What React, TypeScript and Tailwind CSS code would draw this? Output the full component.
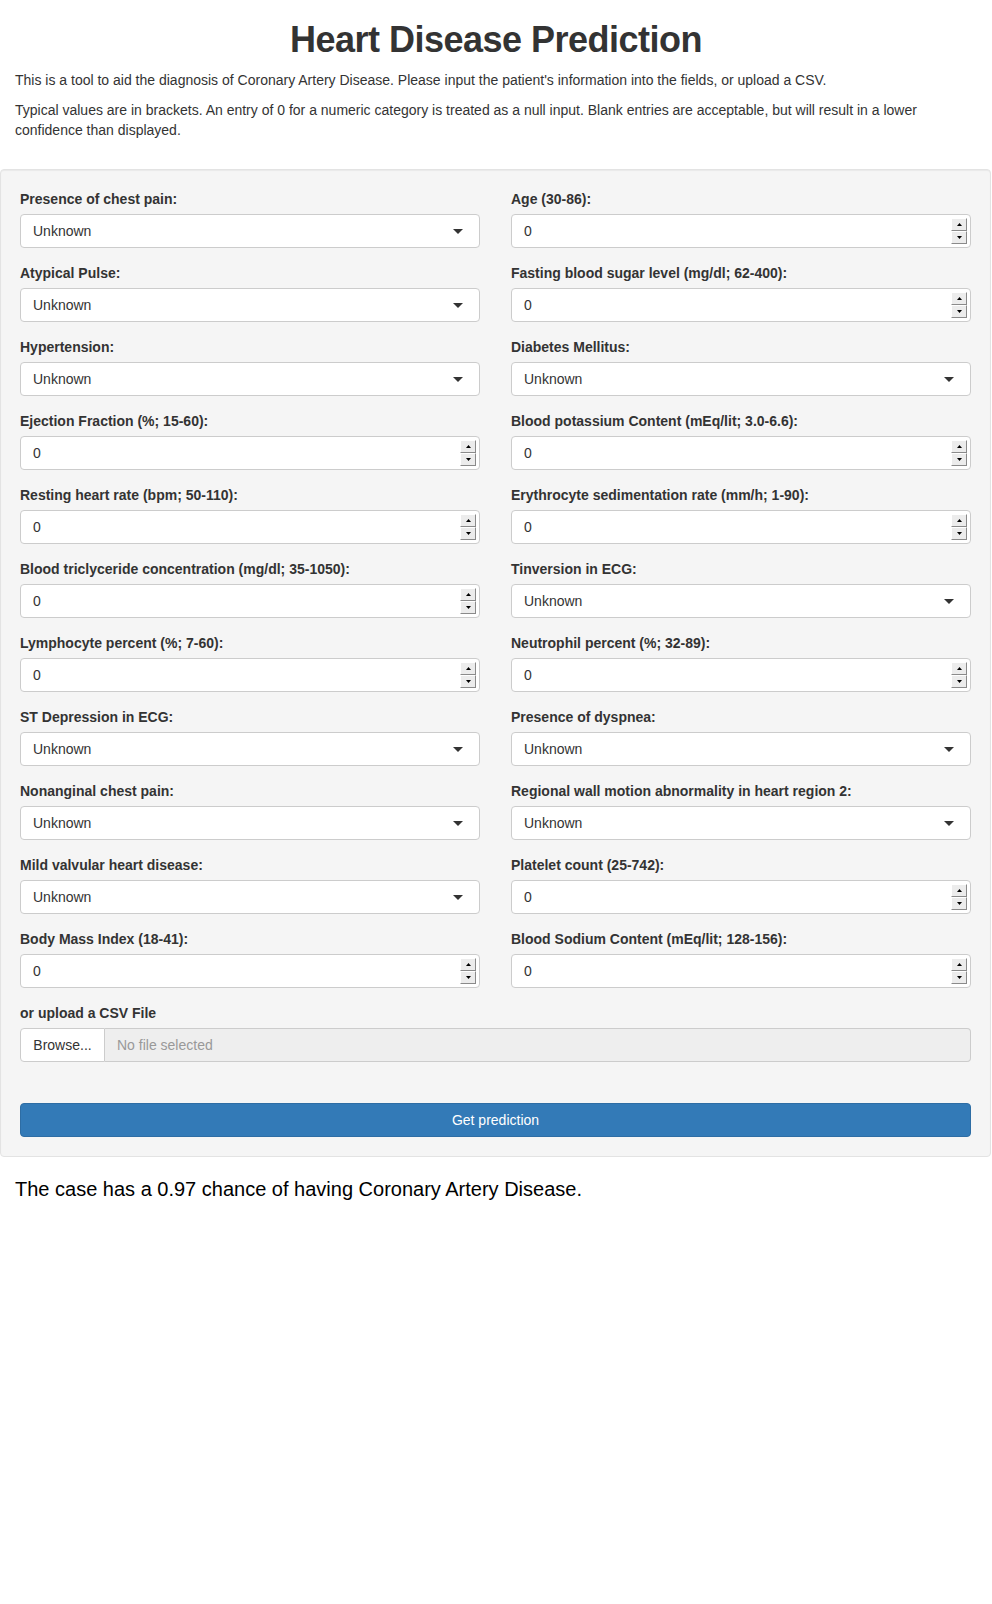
import React from 'react';

type Field = { label: string; kind: 'select' | 'number' };

const LEFT_FIELDS: Field[] = [
  { label: 'Presence of chest pain:', kind: 'select' },
  { label: 'Atypical Pulse:', kind: 'select' },
  { label: 'Hypertension:', kind: 'select' },
  { label: 'Ejection Fraction (%; 15-60):', kind: 'number' },
  { label: 'Resting heart rate (bpm; 50-110):', kind: 'number' },
  { label: 'Blood triclyceride concentration (mg/dl; 35-1050):', kind: 'number' },
  { label: 'Lymphocyte percent (%; 7-60):', kind: 'number' },
  { label: 'ST Depression in ECG:', kind: 'select' },
  { label: 'Nonanginal chest pain:', kind: 'select' },
  { label: 'Mild valvular heart disease:', kind: 'select' },
  { label: 'Body Mass Index (18-41):', kind: 'number' },
];

const RIGHT_FIELDS: Field[] = [
  { label: 'Age (30-86):', kind: 'number' },
  { label: 'Fasting blood sugar level (mg/dl; 62-400):', kind: 'number' },
  { label: 'Diabetes Mellitus:', kind: 'select' },
  { label: 'Blood potassium Content (mEq/lit; 3.0-6.6):', kind: 'number' },
  { label: 'Erythrocyte sedimentation rate (mm/h; 1-90):', kind: 'number' },
  { label: 'Tinversion in ECG:', kind: 'select' },
  { label: 'Neutrophil percent (%; 32-89):', kind: 'number' },
  { label: 'Presence of dyspnea:', kind: 'select' },
  { label: 'Regional wall motion abnormality in heart region 2:', kind: 'select' },
  { label: 'Platelet count (25-742):', kind: 'number' },
  { label: 'Blood Sodium Content (mEq/lit; 128-156):', kind: 'number' },
];

function SpinButton({ up }: { up?: boolean }) {
  return (
    <div className="flex h-[13px] w-[16px] items-center justify-center border border-t-[#fff] border-l-[#fff] border-r-[#8a8a8a] border-b-[#8a8a8a] bg-[#ececec]">
      <svg width="5" height="3" viewBox="0 0 5 3">
        {up ? <path d="M0 3 L2.5 0 L5 3 Z" fill="#000" /> : <path d="M0 0 L5 0 L2.5 3 Z" fill="#000" />}
      </svg>
    </div>
  );
}

function FormField({ field }: { field: Field }) {
  return (
    <div className="mb-[15px]">
      <div className="mb-[5px] text-[14px] font-bold leading-[20px] text-[#333]">{field.label}</div>
      {field.kind === 'select' ? (
        <div className="flex h-[34px] items-center justify-between rounded-[4px] border border-[#ccc] bg-white pl-[12px] pr-[16px] text-[14px] text-[#333]">
          <span>Unknown</span>
          <svg width="10" height="5" viewBox="0 0 10 5">
            <path d="M0 0 L10 0 L5 5 Z" fill="#333" />
          </svg>
        </div>
      ) : (
        <div className="flex h-[34px] items-center justify-between rounded-[4px] border border-[#ccc] bg-white pl-[12px] pr-[3px] text-[14px] text-[#333]">
          <span>0</span>
          <div className="flex flex-col">
            <SpinButton up />
            <SpinButton />
          </div>
        </div>
      )}
    </div>
  );
}

export default function App() {
  return (
    <div className="min-h-[1604px] bg-white pt-px font-['Liberation_Sans',Arial,sans-serif] text-[14px] leading-[20px] text-[#333]">
      <div className="px-[15px] pb-px">
        <h1 className="mt-[19px] mb-[10px] text-center text-[36px] font-bold leading-[40px] tracking-[-0.5px] text-[#333]">
          Heart Disease Prediction
        </h1>
        <p className="mb-[10px]">
          This is a tool to aid the diagnosis of Coronary Artery Disease. Please input the patient's information into the fields, or upload a CSV.
        </p>
        <p className="mb-[10px]">
          Typical values are in brackets. An entry of 0 for a numeric category is treated as a null input. Blank entries are acceptable, but will result in a lower confidence than displayed.
        </p>
      </div>

      {/* Input panel */}
      <div className="mt-[18px] w-[991px] rounded-[4px] border border-[#e3e3e3] bg-[#f5f5f5] p-[19px] shadow-[inset_0_1px_1px_rgba(0,0,0,0.05)]">
        <div className="grid grid-cols-2 gap-x-[31px]">
          <div>
            {LEFT_FIELDS.map((f) => (
              <FormField key={f.label} field={f} />
            ))}
          </div>
          <div>
            {RIGHT_FIELDS.map((f) => (
              <FormField key={f.label} field={f} />
            ))}
          </div>
        </div>

        <div className="mb-[5px] text-[14px] font-bold leading-[20px]">or upload a CSV File</div>
        <div className="flex h-[34px] text-[14px]">
          <div className="flex w-[85px] items-center justify-center rounded-l-[4px] border border-[#ccc] bg-white text-[#333]">
            Browse...
          </div>
          <div className="flex flex-1 items-center rounded-r-[4px] border border-l-0 border-[#ccc] bg-[#eee] pl-[12px] text-[#999]">
            No file selected
          </div>
        </div>

        <div className="mt-[41px] flex h-[34px] items-center justify-center rounded-[4px] border border-[#2e6da4] bg-[#337ab7] text-[14px] text-white">
          Get prediction
        </div>
      </div>

      <div className="mt-[21px] px-[15px] text-[20px] leading-[22px] text-black">
        The case has a 0.97 chance of having Coronary Artery Disease.
      </div>
    </div>
  );
}
